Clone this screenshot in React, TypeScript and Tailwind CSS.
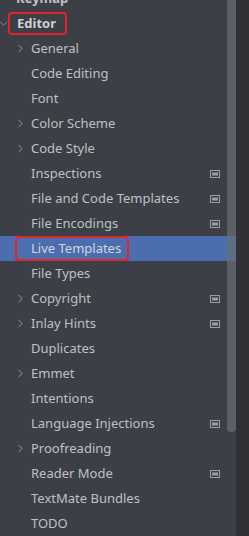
import { ChevronRight, ChevronDown } from 'lucide-react';

const items = [
  { label: 'General', arrow: true },
  { label: 'Code Editing' },
  { label: 'Font' },
  { label: 'Color Scheme', arrow: true },
  { label: 'Code Style', arrow: true },
  { label: 'Inspections', icon: true },
  { label: 'File and Code Templates', icon: true },
  { label: 'File Encodings', icon: true },
  { label: 'Live Templates', selected: true },
  { label: 'File Types' },
  { label: 'Copyright', arrow: true, icon: true },
  { label: 'Inlay Hints', arrow: true, icon: true },
  { label: 'Duplicates' },
  { label: 'Emmet', arrow: true },
  { label: 'Intentions' },
  { label: 'Language Injections', icon: true },
  { label: 'Proofreading', arrow: true },
  { label: 'Reader Mode', icon: true },
  { label: 'TextMate Bundles' },
  { label: 'TODO' },
];

const ProjectIcon = () => (
  <svg width="10" height="8" viewBox="0 0 10 8" className="absolute left-[210px] top-1/2 -translate-y-1/2">
    <rect x="0.5" y="0.5" width="9" height="7" fill="none" stroke="#9a9da3" />
    <rect x="2" y="2.5" width="6" height="3" fill="#9a9da3" />
  </svg>
);

const App = () => {
  return (
    <div className="h-[536px] w-[249px] overflow-hidden flex bg-[#3c3f45] text-[13px] text-[#bfc1c6]" style={{ fontFamily: '"Noto Sans", "Open Sans", sans-serif' }}>
      <div className="relative flex-1">
        <div className="mt-[-14px] flex flex-col">
          <div className="h-[25px] flex items-center pl-[16px] font-bold">Keymap</div>
          <div className="h-[25px] relative flex items-center">
            <ChevronDown className="absolute left-[-3px] w-[13px] h-[13px] text-[#9a9da3]" strokeWidth={1.5} />
            <span className="ml-[8px] h-[23px] flex items-center pl-[7px] pr-[9px] border-2 border-[#e0262b] rounded-sm font-bold text-[#cfd1d6]">Editor</span>
          </div>
          {items.map((it) => (
            <div
              key={it.label}
              className={`h-[25px] relative flex items-center ${it.selected ? 'bg-[#4b6eaf]' : ''}`}
            >
              {it.arrow && (
                <ChevronRight className="absolute left-[14px] w-[13px] h-[13px] text-[#a3a6ac]" strokeWidth={1.6} />
              )}
              {it.selected ? (
                <span className="ml-[15px] h-[25px] flex items-center pl-[14px] pr-[6px] border-2 border-[#e0262b] rounded-sm text-[#d4d6dc]">
                  {it.label}
                </span>
              ) : (
                <span className="ml-[31px]">{it.label}</span>
              )}
              {it.icon && <ProjectIcon />}
            </div>
          ))}
        </div>
        {/* scrollbar thumb */}
        <div className="absolute right-0 top-0 w-[9px] h-[432px] bg-[#6a6d73]/70 rounded-b-sm" />
      </div>
      <div className="w-[13px] bg-[#2f3136]" />
    </div>
  );
};

export default App;
